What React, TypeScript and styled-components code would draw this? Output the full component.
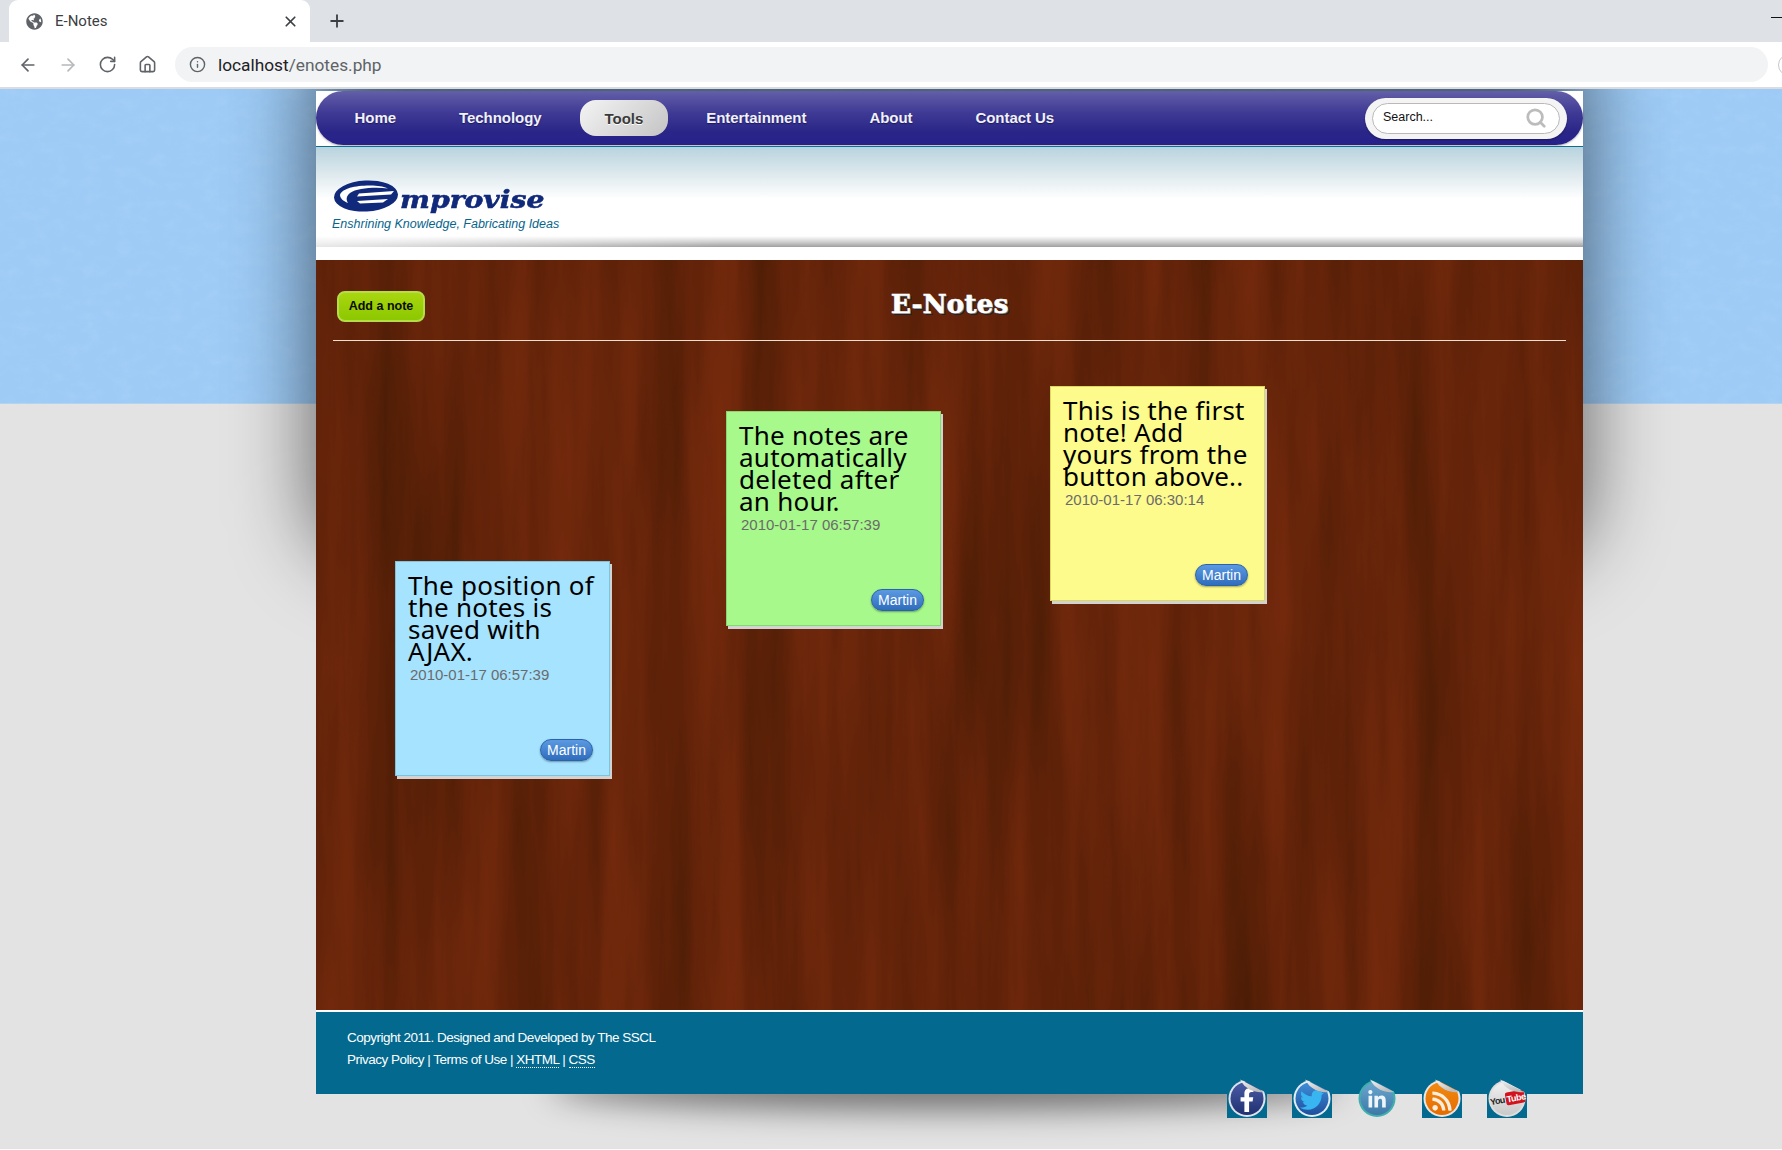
import React from "react";
import styled, { createGlobalStyle } from "styled-components";
import { ArrowLeft, ArrowRight, House, Info, Plus, RotateCw, Search, X } from "lucide-react";
import { FaFacebookF, FaGlobeAmericas, FaLinkedinIn, FaRss, FaTwitter } from "react-icons/fa";

const GlobalStyle = createGlobalStyle`
  html, body {
    margin: 0;
    background: #fff;
    overflow: hidden;
  }
  body {
    font-family: "Liberation Sans", Arial, sans-serif;
  }
`;

/* browser chrome */
const TabStrip = styled.div`
  position: relative;
  height: 42px;
  background: #dee1e6;
  display: flex;
  align-items: flex-end;
  padding-left: 9px;
`;
const Tab = styled.div`
  position: relative;
  width: 301px;
  height: 42px;
  box-sizing: border-box;
  padding: 0 11px 0 17px;
  background: #fff;
  border-radius: 9px 9px 0 0;
  display: flex;
  align-items: center;
  color: #5f6368;
  font: 15px Roboto, sans-serif;

  svg:first-child {
    margin-right: 12px;
  }
`;
const TabTitle = styled.span`
  flex: 1;
  color: #3c4043;
`;
const NewTab = styled.div`
  margin: 0 0 11px 17px;
  height: 20px;
  color: #3c4043;
`;
const WindowDash = styled.div`
  position: absolute;
  right: 0;
  top: 17px;
  width: 11px;
  height: 1px;
  background: #111;
`;
const Toolbar = styled.div`
  height: 45px;
  background: #fff;
  border-bottom: 2px solid #dadce0;
  display: flex;
  align-items: center;
  padding-left: 18px;
  position: relative;
`;
const NavIcon = styled.div<{ $off?: boolean }>`
  width: 20px;
  height: 20px;
  margin-right: 20px;
  color: ${(p) => (p.$off ? "#b6b8bb" : "#5f6368")};
`;
const Omnibox = styled.div`
  width: 1593px;
  height: 35px;
  margin-left: -3px;
  box-sizing: border-box;
  background: #f1f3f4;
  border-radius: 18px;
  display: flex;
  align-items: center;
  padding-left: 14px;
  color: #5f6368;
  font: 17.3px Roboto, sans-serif;
`;
const UrlHost = styled.span`
  margin-left: 12px;
  color: #202124;
`;
const ProfileEdge = styled.div`
  position: absolute;
  left: 1778px;
  top: 12px;
  width: 20px;
  height: 20px;
  border: 1px solid #c5c7ca;
  border-radius: 50%;
`;

/* page */
const Page = styled.div`
  position: relative;
  height: 1060px;
  background: #e3e3e3;
  overflow: hidden;
`;
const SkyBand = styled.div`
  position: absolute;
  left: 0;
  right: 0;
  top: 0;
  height: 314px;
  background: #9dcbf6;
  border-bottom: 1px solid #b3d3ee;

  svg {
    display: block;
    width: 100%;
    height: 100%;
  }
`;
const SideShadow = styled.div`
  position: absolute;
  left: 316px;
  top: -40px;
  width: 1267px;
  height: 525px;
  background: rgba(0, 0, 0, 0.6);
  border-radius: 0 0 12% 12%;
  filter: blur(42px);
`;
const FootShadow = styled.div`
  position: absolute;
  left: 550px;
  top: 975px;
  width: 790px;
  height: 46px;
  background: rgba(0, 0, 0, 0.5);
  border-radius: 50%;
  filter: blur(16px);
`;
const Wrap = styled.div`
  position: relative;
  width: 1267px;
  margin: 2px 0 0 316px;
  background: #fff;
`;
const NavBar = styled.nav`
  height: 54px;
  box-sizing: border-box;
  padding: 0 16px 0 14px;
  border-radius: 27px;
  background: linear-gradient(#645fa8 0%, #3f3a94 40%, #2a2688 75%, #25218a 100%);
  display: flex;
  align-items: center;
  gap: 14px;
  box-shadow: 0 1px 2px rgba(0, 0, 0, 0.3);
`;
const NavItem = styled.a<{ $active?: boolean }>`
  height: 36px;
  line-height: ${(p) => (p.$active ? "38px" : "36px")};
  padding: 0 24.5px;
  border-radius: 16px;
  font-size: 15px;
  font-weight: bold;
  letter-spacing: -0.05px;
  color: ${(p) => (p.$active ? "#3a3a3a" : "#f1f1f6")};
  text-shadow: ${(p) => (p.$active ? "0 1px 0 #fff" : "0 1px 1px #1b1860")};
  background: ${(p) => (p.$active ? "linear-gradient(135deg, #f4f4f4, #c4c4c4)" : "none")};
`;
const SearchBox = styled.div`
  margin-left: auto;
  width: 202px;
  height: 41px;
  box-sizing: border-box;
  padding: 5px 7px;
  background: #f4f4f4;
  border-radius: 21px;
  box-shadow: 0 1px 2px rgba(0, 0, 0, 0.3);
`;
const SearchField = styled.div`
  height: 31px;
  box-sizing: border-box;
  padding: 0 12px 0 10px;
  background: #fff;
  border: 1px solid #b9b9b9;
  border-radius: 16px;
  display: flex;
  align-items: center;
  justify-content: space-between;
  font-size: 12.5px;
  color: #111;
`;
const SearchLabel = styled.span`
  margin-top: -3px;
`;
const Header = styled.header`
  height: 114px;
  margin-top: 1px;
  box-sizing: border-box;
  border-top: 1px solid #0f6f92;
  padding: 33px 0 0 17px;
  background: #fff;
`;
const HeaderFade = styled.div`
  position: absolute;
  left: 0;
  right: 0;
  top: 56px;
  height: 100px;
  background:
    linear-gradient(to right, rgba(255, 255, 255, 0.75) 0, rgba(255, 255, 255, 0) 32%) 0 88px / 100% 12px no-repeat,
    linear-gradient(transparent 89%, #cfcfcf 95%, #a0a0a0 100%),
    linear-gradient(#b8d3de 0%, #dfeaee 28%, #fff 52%);
`;
const Logo = styled.div`
  position: relative;
  display: flex;
  align-items: flex-end;
`;
const LogoWord = styled.span`
  display: inline-block;
  margin: 0 0 -3px 1px;
  font: italic bold 25px/32px "DejaVu Serif", serif;
  color: #10297a;
  -webkit-text-stroke: 0.6px #10297a;
  transform: scaleX(1.13);
  transform-origin: left center;
`;
const Tagline = styled.div`
  position: relative;
  margin: 4px 0 0 -1px;
  font-size: 12.5px;
  font-style: italic;
  color: #07658c;
`;
const Board = styled.main`
  position: relative;
  height: 750px;
  background: #62260b;
  overflow: hidden;

  > svg {
    position: absolute;
    left: 0;
    top: 0;
    width: 100%;
    height: 100%;
  }
`;
const BoardHead = styled.div`
  position: relative;
  height: 81px;
  margin: 0 17px;
  box-sizing: border-box;
  border-bottom: 1px solid #f6dfcc;
  display: grid;
  grid-template-columns: 1fr auto 1fr;
  align-items: center;
`;
const AddButton = styled.a`
  justify-self: start;
  margin: 13px 0 0 4px;
  width: 88px;
  height: 31px;
  box-sizing: border-box;
  border: 2px solid #b5dd4a;
  border-radius: 8px;
  background: linear-gradient(#a8d60f, #8cc800);
  text-align: center;
  font-size: 12.5px;
  font-weight: bold;
  line-height: 27px;
  color: #0b0b00;
`;
const Title = styled.h1`
  margin: 6px 0 0;
  font: bold 26.5px "DejaVu Serif", serif;
  color: #fff;
  -webkit-text-stroke: 0.5px #fff;
  text-shadow: 1px 1px 0 #777, 2px 2px 0 #222;
`;

const tones = {
  blue: { bg: "#a6e3ff", edge: "#7cc3de" },
  green: { bg: "#a6f98a", edge: "#86d870" },
  yellow: { bg: "#fdfb8c", edge: "#dcd95e" },
};

const Note = styled.article<{ $x: number; $y: number; $tone: keyof typeof tones }>`
  position: absolute;
  left: ${(p) => p.$x}px;
  top: ${(p) => p.$y}px;
  width: 215px;
  height: 215px;
  box-sizing: border-box;
  padding: 12px 16px 14px 12px;
  display: flex;
  flex-direction: column;
  background: ${(p) => tones[p.$tone].bg};
  border: 1px solid ${(p) => tones[p.$tone].edge};
  box-shadow: 2px 3px 0 #d2d2d2;
`;
const NoteText = styled.p`
  margin: 0;
  font: 26px/22px "Noto Sans", sans-serif;
  letter-spacing: 0.25px;
  color: #000;
  white-space: pre;
`;
const NoteDate = styled.time`
  margin: 4px 0 0 2px;
  font-size: 15px;
  line-height: 18px;
  color: #6b6b6b;
`;
const AuthorTag = styled.span`
  margin-top: auto;
  align-self: flex-end;
  width: 53px;
  height: 22px;
  box-sizing: border-box;
  border: 1px solid #2b63aa;
  border-radius: 11px;
  background: linear-gradient(#5b9ae2, #2f6dbd);
  box-shadow: 0 1px 2px rgba(0, 0, 0, 0.35);
  text-align: center;
  font-size: 14px;
  line-height: 20px;
  color: #fff;
`;
const Footer = styled.footer`
  position: relative;
  height: 82px;
  margin-top: 2px;
  box-sizing: border-box;
  padding: 15px 0 0 31px;
  background: #03698f;
  color: #fff;
  font-size: 13.5px;
  line-height: 22px;
  letter-spacing: -0.5px;
`;
const FootLink = styled.a`
  border-bottom: 1px dotted #fff;
`;
const SocialRow = styled.div`
  position: absolute;
  left: 911px;
  top: 67px;
  display: flex;
  gap: 25px;
`;
const StickerArt = styled.svg`
  display: block;
  width: 40px;
  height: 39px;
`;

const FOOT = "#03698f";

type StickerProps = {
  id: string;
  from: string;
  to: string;
  ring: string;
  backed?: boolean;
  children: React.ReactNode;
};

// peeled sticker: round badge, the top right corner folded over
const Sticker = ({ id, from, to, ring, backed = true, children }: StickerProps) => (
  <StickerArt viewBox="0 0 40 39">
    <defs>
      <linearGradient id={id} x1="0" y1="0" x2="0" y2="1">
        <stop offset="0" stopColor={from} />
        <stop offset="1" stopColor={to} />
      </linearGradient>
      <linearGradient id={`${id}-peel`} x1="0" y1="0" x2="0.5" y2="1">
        <stop offset="0" stopColor="#f4f4f4" />
        <stop offset="1" stopColor="#bdbdbd" />
      </linearGradient>
    </defs>
    {backed && <rect width="40" height="39" fill={FOOT} />}
    <circle cx="20" cy="19.5" r="18.5" fill={ring} />
    <circle cx="20" cy="19.5" r="16.5" fill={`url(#${id})`} />
    {children}
    <path d="M13 0 L38 13 L40 13 L40 0 Z" fill={FOOT} />
    <path d="M13 0.5 L37 13 C30 14 19 12 13 0.5 Z" fill={`url(#${id}-peel)`} />
  </StickerArt>
);

const EmproviseMark = () => (
  <svg width="66" height="33" viewBox="0 0 66 33">
    <ellipse cx="33" cy="16" rx="32" ry="15.5" fill="#10297a" transform="rotate(-3 33 16)" />
    <path d="M7 15 C9 8 24 5 40 5.5 C47 5.8 52 7 55 8.5 C42 7 24 8 17 13 C13 16 13 20 15 23 C10 21 7 18 7 15 Z" fill="#fff" />
    <path d="M26 13.5 L61 11 L58 14.5 L24 16.5 Z" fill="#fff" />
    <path d="M24 21 L55 19 L50 22.5 L27 23.5 Z" fill="#fff" />
  </svg>
);

const notes = [
  {
    id: 1,
    x: 79,
    y: 301,
    tone: "blue" as const,
    text: "The position of\nthe notes is\nsaved with\nAJAX.",
    date: "2010-01-17 06:57:39",
  },
  {
    id: 2,
    x: 410,
    y: 151,
    tone: "green" as const,
    text: "The notes are\nautomatically\ndeleted after\nan hour.",
    date: "2010-01-17 06:57:39",
  },
  {
    id: 3,
    x: 734,
    y: 126,
    tone: "yellow" as const,
    text: "This is the first\nnote! Add\nyours from the\nbutton above..",
    date: "2010-01-17 06:30:14",
  },
];

const navLinks = ["Home", "Technology", "Tools", "Entertainment", "About", "Contact Us"];

const App: React.FC = () => {
  return (
    <>
      <GlobalStyle />
      <TabStrip>
        <Tab>
          <FaGlobeAmericas size={17} />
          <TabTitle>E-Notes</TabTitle>
          <X size={17} color="#3c4043" strokeWidth={2.4} />
        </Tab>
        <NewTab>
          <Plus size={20} strokeWidth={2.2} />
        </NewTab>
        <WindowDash />
      </TabStrip>
      <Toolbar>
        <NavIcon><ArrowLeft size={20} /></NavIcon>
        <NavIcon $off><ArrowRight size={20} /></NavIcon>
        <NavIcon><RotateCw size={19} /></NavIcon>
        <NavIcon><House size={19} /></NavIcon>
        <Omnibox>
          <Info size={17} />
          <UrlHost>localhost</UrlHost>/enotes.php
        </Omnibox>
        <ProfileEdge />
      </Toolbar>
      <Page>
        <SkyBand>
          <svg>
            <filter id="plaster" x="0" y="0" width="100%" height="100%">
              <feTurbulence type="fractalNoise" baseFrequency="0.06 0.09" numOctaves="4" seed="8" />
              <feColorMatrix values="0 0 0 0 1  0 0 0 0 1  0 0 0 0 1  0.9 0 0 0 -0.35" />
            </filter>
            <rect width="100%" height="100%" filter="url(#plaster)" opacity="0.12" />
          </svg>
        </SkyBand>
        <SideShadow />
        <FootShadow />
        <Wrap>
          <NavBar>
            {navLinks.map((link) => (
              <NavItem key={link} $active={link === "Tools"}>{link}</NavItem>
            ))}
            <SearchBox>
              <SearchField>
                <SearchLabel>Search...</SearchLabel>
                <Search size={22} color="#bcbcbc" strokeWidth={3} />
              </SearchField>
            </SearchBox>
          </NavBar>
          <HeaderFade />
          <Header>
            <Logo>
              <EmproviseMark />
              <LogoWord>mprovise</LogoWord>
            </Logo>
            <Tagline>Enshrining Knowledge, Fabricating Ideas</Tagline>
          </Header>
          <Board>
            <svg>
              <filter id="wood" x="0" y="0" width="100%" height="100%" colorInterpolationFilters="sRGB">
                <feTurbulence type="fractalNoise" baseFrequency="0.021 0.0016" numOctaves="6" seed="23" />
                <feColorMatrix values="1 0 0 0 0  1 0 0 0 0  1 0 0 0 0  0 0 0 0 1" />
                <feComponentTransfer>
                  <feFuncR type="table" tableValues="0.27 0.31 0.35 0.39 0.43 0.46 0.49" />
                  <feFuncG type="table" tableValues="0.1 0.115 0.13 0.14 0.155 0.165 0.18" />
                  <feFuncB type="table" tableValues="0.02 0.025 0.03 0.04 0.045 0.05 0.055" />
                </feComponentTransfer>
              </filter>
              <rect width="100%" height="100%" filter="url(#wood)" />
            </svg>
            <BoardHead>
              <AddButton>Add a note</AddButton>
              <Title>E-Notes</Title>
            </BoardHead>
            {notes.map((note) => (
              <Note key={note.id} $x={note.x} $y={note.y} $tone={note.tone}>
                <NoteText>{note.text}</NoteText>
                <NoteDate>{note.date}</NoteDate>
                <AuthorTag>Martin</AuthorTag>
              </Note>
            ))}
          </Board>
          <Footer>
            Copyright 2011. Designed and Developed by The SSCL
            <br />
            Privacy Policy | Terms of Use | <FootLink>XHTML</FootLink> | <FootLink>CSS</FootLink>
            <SocialRow>
              <Sticker id="fb" from="#4a5ca8" to="#20306f" ring="#dfe3ee">
                <FaFacebookF x="8" y="9" size={24} color="#fff" />
              </Sticker>
              <Sticker id="tw" from="#3f8fd8" to="#1d4f9e" ring="#e3edf6">
                <FaTwitter x="8" y="9" size={24} color="#39b5f2" />
              </Sticker>
              <Sticker id="in" from="#6aa7cf" to="#3d78a8" ring="#3fb0ae" backed={false}>
                <FaLinkedinIn x="10" y="11" size={20} color="#eef5fa" />
              </Sticker>
              <Sticker id="rs" from="#f28a12" to="#e56c00" ring="#e8e8e8">
                <FaRss x="9" y="11" size={22} color="#fbeedd" />
              </Sticker>
              <Sticker id="yt" from="#f2f2f2" to="#c9c9c9" ring="#dedede">
                <rect x="18.5" y="12" width="19" height="13" rx="2" fill="#d3121b" transform="rotate(-10 28 18)" />
                <text x="3" y="25" fontFamily="Liberation Sans" fontSize="9" fontWeight="bold" fill="#222" transform="rotate(-10 10 22)">You</text>
                <text x="19.5" y="22" fontFamily="Liberation Sans" fontSize="9" fontWeight="bold" fill="#fff" transform="rotate(-10 28 18)">Tube</text>
              </Sticker>
            </SocialRow>
          </Footer>
        </Wrap>
      </Page>
    </>
  );
};

export default App;
